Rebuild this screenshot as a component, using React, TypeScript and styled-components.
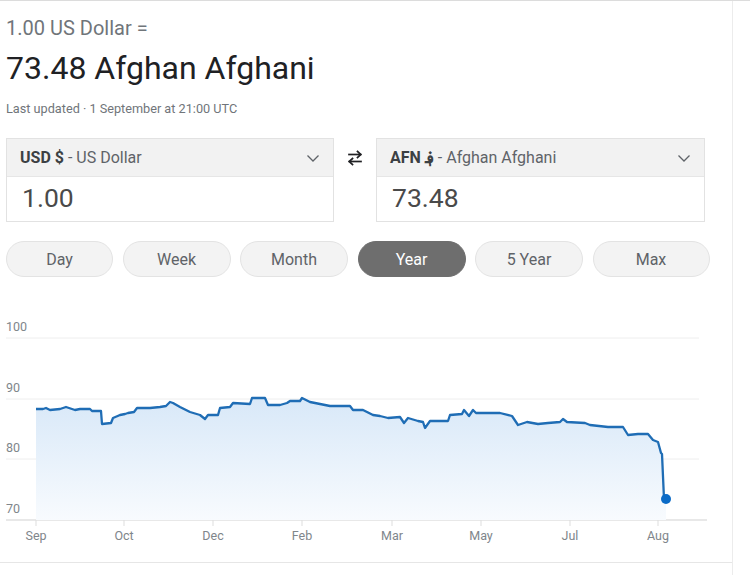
import React from "react";
import styled, { createGlobalStyle } from "styled-components";

const GlobalStyle = createGlobalStyle`
  html, body {
    margin: 0;
    padding: 0;
    background: #ffffff;
    font-family: Roboto, "Liberation Sans", Arial, sans-serif;
  }
  body {
    border-top: 1px solid #dcdcdc;
  }
`;

const Page = styled.div`
  display: flex;
  height: 574px;
  overflow: hidden;
`;

const Main = styled.div`
  width: 732px;
  border-right: 1px solid #ececec;
  display: flex;
  flex-direction: column;
`;

const Content = styled.div`
  padding-left: 6px;
`;

const Subtitle = styled.div`
  margin-top: 16px;
  font-size: 20px;
  line-height: 22px;
  color: #70757a;
`;

const Title = styled.div`
  margin-top: 11px;
  font-size: 32px;
  line-height: 36px;
  color: #202124;
`;

const Updated = styled.div`
  margin-top: 15px;
  font-size: 12.7px;
  line-height: 16px;
  color: #70757a;
`;

const Converter = styled.div`
  margin-top: 21px;
  display: grid;
  grid-template-columns: 328px 42px 329px;
`;

const Box = styled.div`
  border: 1px solid #e2e2e2;
  height: 84px;
  box-sizing: border-box;
  display: flex;
  flex-direction: column;
`;

const BoxHeader = styled.div`
  height: 37px;
  background: #f2f2f2;
  border-bottom: 1px solid #e6e6e6;
  display: flex;
  align-items: center;
  padding: 0 12px 0 13px;
  font-size: 16px;
  color: #3c4043;
`;

const Code = styled.b`
  font-weight: 700;
  color: #3c4043;
  margin-right: 4px;
`;

const CurrencyName = styled.span`
  flex: 1;
  color: #5f6368;
`;

const Value = styled.div`
  flex: 1;
  display: flex;
  align-items: center;
  padding: 0 0 4px 15px;
  font-size: 26.5px;
  color: #4a4a4a;
`;

const Swap = styled.div`
  display: flex;
  justify-content: center;
  padding-top: 12px;
`;

const Ranges = styled.div`
  margin-top: 19px;
  display: grid;
  grid-template-columns: 107px 108px 108px 108px 108px 117px;
  gap: 9.5px;
`;

const RangeButton = styled.div<{ active?: boolean }>`
  height: 36px;
  border-radius: 18px;
  box-sizing: border-box;
  display: flex;
  align-items: center;
  justify-content: center;
  font-size: 16px;
  background: ${(p) => (p.active ? "#6e6e6e" : "#f3f3f3")};
  border: 1px solid ${(p) => (p.active ? "#6e6e6e" : "#e3e3e3")};
  color: ${(p) => (p.active ? "#ffffff" : "#5f6368")};
`;

const ChartWrap = styled.div`
  margin-top: 23px;
  height: 250px;
`;

const BottomRule = styled.div`
  margin-top: 12px;
  border-top: 1px solid #e6e6e6;
`;

const Chevron = () => (
  <svg width="16" height="16" viewBox="0 0 16 16">
    <path d="M2.5 5.5 L8 11 L13.5 5.5" fill="none" stroke="#5f6368" strokeWidth="1.3" />
  </svg>
);

const SwapIcon = () => (
  <svg width="16" height="16" viewBox="0 0 16 16">
    <g fill="none" stroke="#202124" strokeWidth="1.7" strokeLinecap="square">
      <path d="M2 4.5 H13.5" />
      <path d="M10.5 1.5 L13.8 4.5 L10.5 7.5" />
      <path d="M14 11.5 H2.5" />
      <path d="M5.5 8.5 L2.2 11.5 L5.5 14.5" />
    </g>
  </svg>
);

// chart points in page coords (x, y); chart top sits at y=300
const points: [number, number][] = [
  [36, 409], [43, 409], [46, 408], [50, 410], [60, 409], [66, 407], [75, 410],
  [80, 409], [90, 409], [92, 411], [101, 411], [102, 424], [111, 423], [113, 418],
  [120, 415], [125, 414], [128, 413], [134, 412], [137, 408], [150, 408], [160, 407],
  [166, 406], [170, 402], [173, 403], [180, 407], [186, 410], [190, 412], [200, 415],
  [205, 419], [208, 415], [214, 415], [218, 415], [220, 408], [230, 407], [233, 403],
  [250, 404], [252, 398], [265, 398], [268, 405], [280, 405], [287, 403], [290, 401],
  [300, 401], [302, 398], [310, 402], [320, 404], [330, 406], [340, 406], [350, 406],
  [353, 410], [363, 410], [367, 412], [373, 415], [380, 416], [388, 418], [400, 417],
  [404, 423], [408, 418], [418, 421], [423, 422], [425, 428], [430, 421], [448, 421],
  [450, 415], [462, 414], [464, 410], [469, 416], [473, 410], [476, 413], [500, 413],
  [512, 416], [518, 425], [527, 422], [538, 424], [548, 423], [560, 422], [563, 419],
  [567, 422], [585, 423], [590, 425], [608, 427], [623, 427], [628, 435], [638, 434],
  [648, 434], [653, 440], [658, 442], [661, 453], [662, 454], [664, 499], [666, 499],
];

const yLabels: [string, number][] = [
  ["100", 338],
  ["90", 399],
  ["80", 459],
  ["70", 520],
];

const xLabels: [string, number][] = [
  ["Sep", 36],
  ["Oct", 124],
  ["Dec", 213],
  ["Feb", 302],
  ["Mar", 392],
  ["May", 481],
  ["Jul", 570],
  ["Aug", 658],
];

const Chart = () => {
  const top = 300;
  const pts = points.map(([x, y]) => [x, y - top] as [number, number]);
  const line = pts.map(([x, y], i) => `${i ? "L" : "M"}${x} ${y}`).join(" ");
  const area = `${line} L666 220 L36 220 Z`;
  return (
    <svg width="732" height="250" viewBox="0 0 732 250">
      <defs>
        <linearGradient id="fill" x1="0" y1="0" x2="0" y2="1">
          <stop offset="0" stopColor="#d8e8f8" />
          <stop offset="1" stopColor="#f8fbfe" />
        </linearGradient>
      </defs>
      {yLabels.map(([label, y]) => (
        <g key={label}>
          <line
            x1="6"
            x2={label === "70" ? 707 : 699}
            y1={y - top}
            y2={y - top}
            stroke={label === "70" ? "#e0e0e0" : "#eeeeee"}
            strokeWidth={label === "70" ? 1.5 : 1}
          />
          <text
            x="6"
            y={y - top - 7}
            fontSize="12.5"
            fill="#80868b"
            fontFamily="Roboto, 'Liberation Sans', sans-serif"
          >
            {label}
          </text>
        </g>
      ))}
      <path d={area} fill="url(#fill)" />
      <path d={line} fill="none" stroke="#1f6db5" strokeWidth="2.3" strokeLinejoin="round" />
      <circle cx="666" cy={499 - top} r="5" fill="#0b6bc7" />
      {xLabels.map(([label, x]) => (
        <g key={label}>
          <line x1={x} x2={x} y1="220" y2="226" stroke="#dddddd" />
          <text
            x={x}
            y="240"
            fontSize="12.5"
            textAnchor="middle"
            fill="#80868b"
            fontFamily="Roboto, 'Liberation Sans', sans-serif"
          >
            {label}
          </text>
        </g>
      ))}
    </svg>
  );
};

const ranges = ["Day", "Week", "Month", "Year", "5 Year", "Max"];

const App = () => {
  return (
    <>
      <GlobalStyle />
      <Page>
        <Main>
          <Content>
            <Subtitle>1.00 US Dollar =</Subtitle>
            <Title>73.48 Afghan Afghani</Title>
            <Updated>Last updated · 1 September at 21:00 UTC</Updated>
            <Converter>
              <Box>
                <BoxHeader>
                  <Code>USD $</Code>
                  <CurrencyName>- US Dollar</CurrencyName>
                  <Chevron />
                </BoxHeader>
                <Value>1.00</Value>
              </Box>
              <Swap>
                <SwapIcon />
              </Swap>
              <Box>
                <BoxHeader>
                  <Code>AFN ؋</Code>
                  <CurrencyName>- Afghan Afghani</CurrencyName>
                  <Chevron />
                </BoxHeader>
                <Value>73.48</Value>
              </Box>
            </Converter>
            <Ranges>
              {ranges.map((r) => (
                <RangeButton key={r} active={r === "Year"}>
                  {r}
                </RangeButton>
              ))}
            </Ranges>
          </Content>
          <ChartWrap>
            <Chart />
          </ChartWrap>
          <BottomRule />
        </Main>
      </Page>
    </>
  );
};

export default App;
